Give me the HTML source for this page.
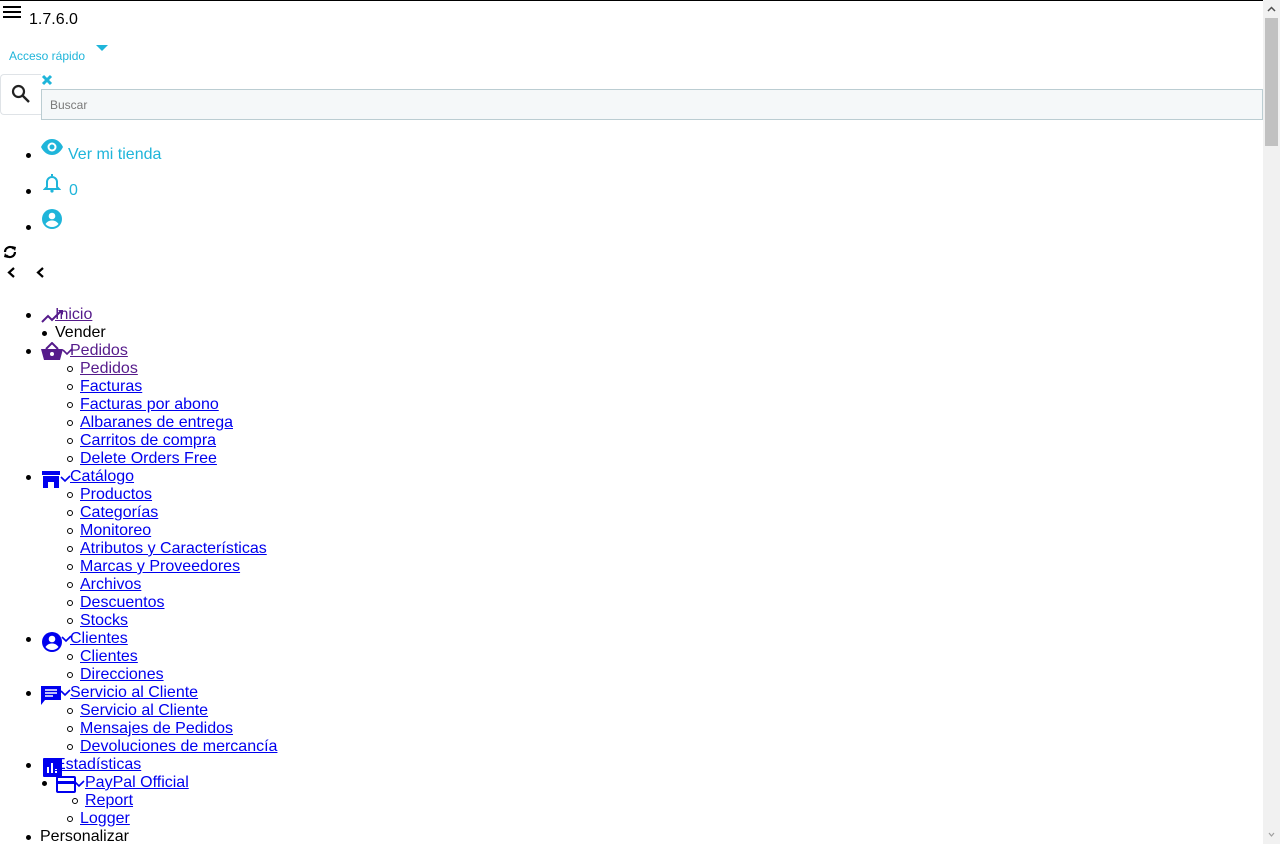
<!DOCTYPE html>
<html><head><meta charset="utf-8"><style>
html,body{margin:0;padding:0;}
body{width:1280px;height:844px;overflow:hidden;position:relative;background:#fff;font-family:"Liberation Sans",Arial,sans-serif;font-size:16px;color:#000;}
.a{position:absolute;white-space:nowrap;line-height:18px;}
.u,.m{text-decoration:underline;margin-top:2px;}
.m{text-decoration:none}
.b{color:#0000ee}.v{color:#551a8b}.c{color:#1fb5da}
.dot{position:absolute;width:5px;height:5px;border-radius:50%;background:#000;}
.cir{position:absolute;width:4px;height:4px;border-radius:50%;border:1px solid #000;}
svg{position:absolute;}
</style></head><body>
<div style="position:absolute;left:0;top:0;width:1263px;height:1px;background:#000"></div>
<div style="position:absolute;left:1263px;top:0;width:17px;height:844px;background:#f1f1f1"></div>
<div style="position:absolute;left:1265px;top:18px;width:13px;height:128px;background:#c1c1c1"></div>
<svg style="left:1266px;top:5px" width="11" height="8" viewBox="0 0 11 8"><path d="M2 6 L5.5 2.5 L9 6" stroke="#505050" stroke-width="1.5" fill="none"/></svg>
<svg style="left:1266px;top:831px" width="11" height="8" viewBox="0 0 11 8"><path d="M3 2 L5.5 5 L8 2" stroke="#a0a0a0" stroke-width="1.2" fill="none"/></svg>

<svg style="left:3px;top:6px" width="18" height="13" viewBox="0 0 18 13"><path d="M0 1h18M0 6h18M0 11h18" stroke="#000" stroke-width="2"/></svg>
<div class="a" style="left:29px;top:11px">1.7.6.0</div>
<div class="a c" style="left:9px;top:47px;font-size:12px">Acceso rápido</div>
<svg style="left:96px;top:45px" width="12" height="6" viewBox="0 0 12 6"><path d="M0 0h12L6 6z" fill="#1fb5da"/></svg>

<div style="position:absolute;left:0;top:74px;width:41px;height:41px;border:1px solid #dfe3e7;border-right:none;border-radius:4px 0 0 4px;box-sizing:border-box"></div>
<svg style="left:11px;top:84px" width="20" height="20" viewBox="0 0 20 20"><circle cx="7.5" cy="7.5" r="5.5" stroke="#222" stroke-width="2.2" fill="none"/><path d="M11.5 11.5L18 18" stroke="#222" stroke-width="2.4"/></svg>
<svg style="left:41px;top:74px" width="12" height="12" viewBox="0 0 12 12"><path d="M2 2L10 10M10 2L2 10" stroke="#1fb5da" stroke-width="3"/></svg>
<div style="position:absolute;left:41px;top:89px;width:1222px;height:31px;background:#f5f8f9;border:1px solid #bbcdd2;box-sizing:border-box"></div>
<div class="a" style="left:50px;top:96px;font-size:12px;color:#7a7a7a">Buscar</div>

<div class="dot" style="left:26px;top:153px"></div>
<svg style="left:40px;top:138px" width="24" height="18" viewBox="0 0 24 18"><path d="M1 9C4 3 8 1 12 1s8 2 11 8c-3 6-7 8-11 8S4 15 1 9z" fill="#1fb5da"/><circle cx="12" cy="9" r="4.5" fill="#fff"/><circle cx="12" cy="9" r="2.5" fill="#1fb5da"/></svg>
<div class="a c" style="left:68px;top:146px">Ver mi tienda</div>

<div class="dot" style="left:26px;top:189px"></div>
<svg style="left:43px;top:173px" width="18" height="20" viewBox="0 0 18 20"><path d="M9 1v2M4 14V9a5 5 0 0 1 10 0v5l2 2H2z" stroke="#1fb5da" stroke-width="2" fill="none"/><circle cx="9" cy="18" r="1.6" fill="#1fb5da"/></svg>
<div class="a c" style="left:69px;top:182px">0</div>

<div class="dot" style="left:26px;top:225px"></div>
<svg style="left:41px;top:208px" width="22" height="22" viewBox="0 0 22 22"><circle cx="11" cy="11" r="10" fill="#1fb5da"/><circle cx="11" cy="8" r="3.3" fill="#fff"/><path d="M4.5 16c2-3 4.3-3.5 6.5-3.5s4.5.5 6.5 3.5c-1.8 2-4 3-6.5 3s-4.7-1-6.5-3z" fill="#fff"/></svg>

<svg style="left:2px;top:244px" width="16" height="16" viewBox="0 0 16 16"><path d="M3 8a5 5 0 0 1 9-3M13 8a5 5 0 0 1-9 3" stroke="#000" stroke-width="2.2" fill="none"/><path d="M10 2l4 1-1 4zM6 14l-4-1 1-4z" fill="#000"/></svg>
<svg style="left:6px;top:266px" width="10" height="13" viewBox="0 0 10 13"><path d="M8 2L3 6.5 8 11" stroke="#000" stroke-width="2.2" fill="none"/></svg>
<svg style="left:35px;top:266px" width="10" height="13" viewBox="0 0 10 13"><path d="M8 2L3 6.5 8 11" stroke="#000" stroke-width="2.2" fill="none"/></svg>

<div class="dot" style="left:26px;top:313px"></div>
<svg style="left:41px;top:308px" width="24" height="16" viewBox="0 0 24 16"><path d="M1 14l6-6 4 4 9-9" stroke="#551a8b" stroke-width="2" fill="none"/><path d="M17 2h5v5z" fill="#551a8b"/></svg>
<div class="a u v" style="left:55px;top:304px">Inicio</div>
<div class="dot" style="left:42px;top:331px"></div>
<div class="a m" style="left:55px;top:322px">Vender</div>

<div class="dot" style="left:26px;top:349px"></div>
<svg style="left:41px;top:342px" width="32" height="20" viewBox="0 0 32 20"><path d="M0 7h22l-3 11H3z" fill="#551a8b"/><path d="M5 7l6-6 6 6" stroke="#551a8b" stroke-width="2" fill="none"/><circle cx="11" cy="12" r="2" fill="#fff"/><path d="M22 8l4 4 5-5" stroke="#551a8b" stroke-width="1.6" fill="none"/></svg>
<div class="a u v" style="left:70px;top:340px">Pedidos</div>

<div class="cir" style="left:67px;top:366px"></div><div class="a u v" style="left:80px;top:358px">Pedidos</div>
<div class="cir" style="left:67px;top:384px"></div><div class="a u b" style="left:80px;top:376px">Facturas</div>
<div class="cir" style="left:67px;top:402px"></div><div class="a u b" style="left:80px;top:394px">Facturas por abono</div>
<div class="cir" style="left:67px;top:420px"></div><div class="a u b" style="left:80px;top:412px">Albaranes de entrega</div>
<div class="cir" style="left:67px;top:438px"></div><div class="a u b" style="left:80px;top:430px">Carritos de compra</div>
<div class="cir" style="left:67px;top:456px"></div><div class="a u b" style="left:80px;top:448px">Delete Orders Free</div>

<div class="dot" style="left:26px;top:475px"></div>
<svg style="left:42px;top:469px" width="32" height="20" viewBox="0 0 32 20"><rect x="0" y="2" width="18" height="4" fill="#0000ee"/><path d="M1 7h16v12h-5v-6H6v6H1z" fill="#0000ee"/><path d="M19 8l4 4 5-5" stroke="#0000ee" stroke-width="1.6" fill="none"/></svg>
<div class="a u b" style="left:70px;top:466px">Catálogo</div>
<div class="cir" style="left:67px;top:492px"></div><div class="a u b" style="left:80px;top:484px">Productos</div>
<div class="cir" style="left:67px;top:510px"></div><div class="a u b" style="left:80px;top:502px">Categorías</div>
<div class="cir" style="left:67px;top:528px"></div><div class="a u b" style="left:80px;top:520px">Monitoreo</div>
<div class="cir" style="left:67px;top:546px"></div><div class="a u b" style="left:80px;top:538px">Atributos y Características</div>
<div class="cir" style="left:67px;top:564px"></div><div class="a u b" style="left:80px;top:556px">Marcas y Proveedores</div>
<div class="cir" style="left:67px;top:582px"></div><div class="a u b" style="left:80px;top:574px">Archivos</div>
<div class="cir" style="left:67px;top:600px"></div><div class="a u b" style="left:80px;top:592px">Descuentos</div>
<div class="cir" style="left:67px;top:618px"></div><div class="a u b" style="left:80px;top:610px">Stocks</div>

<div class="dot" style="left:26px;top:637px"></div>
<svg style="left:41px;top:631px" width="32" height="22" viewBox="0 0 32 22"><circle cx="11" cy="11" r="10" fill="#0000ee"/><circle cx="11" cy="8" r="3.3" fill="#fff"/><path d="M4.5 16c2-3 4.3-3.5 6.5-3.5s4.5.5 6.5 3.5c-1.8 2-4 3-6.5 3s-4.7-1-6.5-3z" fill="#fff"/><path d="M21 6l4 4 5-5" stroke="#0000ee" stroke-width="1.6" fill="none"/></svg>
<div class="a u b" style="left:70px;top:628px">Clientes</div>
<div class="cir" style="left:67px;top:654px"></div><div class="a u b" style="left:80px;top:646px">Clientes</div>
<div class="cir" style="left:67px;top:672px"></div><div class="a u b" style="left:80px;top:664px">Direcciones</div>

<div class="dot" style="left:26px;top:691px"></div>
<svg style="left:41px;top:685px" width="32" height="22" viewBox="0 0 32 22"><path d="M0 1h20v14H4l-4 5z" fill="#0000ee"/><path d="M4 5h12M4 8h12M4 11h8" stroke="#fff" stroke-width="1.6"/><path d="M20 6l4 4 5-5" stroke="#0000ee" stroke-width="1.6" fill="none"/></svg>
<div class="a u b" style="left:70px;top:682px">Servicio al Cliente</div>
<div class="cir" style="left:67px;top:708px"></div><div class="a u b" style="left:80px;top:700px">Servicio al Cliente</div>
<div class="cir" style="left:67px;top:726px"></div><div class="a u b" style="left:80px;top:718px">Mensajes de Pedidos</div>
<div class="cir" style="left:67px;top:744px"></div><div class="a u b" style="left:80px;top:736px">Devoluciones de mercancía</div>

<div class="dot" style="left:26px;top:763px"></div>
<svg style="left:43px;top:758px" width="19" height="19" viewBox="0 0 19 19"><rect width="19" height="19" rx="1" fill="#0000ee"/><path d="M5 15V9M9 15V5M13 15v-4" stroke="#fff" stroke-width="2"/></svg>
<div class="a u b" style="left:55px;top:754px">Estadísticas</div>
<div class="dot" style="left:42px;top:781px"></div>
<svg style="left:56px;top:775px" width="32" height="20" viewBox="0 0 32 20"><rect x="1" y="2" width="18" height="15" rx="1" stroke="#0000ee" stroke-width="2" fill="none"/><rect x="1" y="6" width="18" height="3" fill="#0000ee"/><path d="M19 7l4 4 5-5" stroke="#0000ee" stroke-width="1.6" fill="none"/></svg>
<div class="a u b" style="left:85px;top:772px">PayPal Official</div>
<div class="cir" style="left:72px;top:798px"></div><div class="a u b" style="left:85px;top:790px">Report</div>
<div class="cir" style="left:67px;top:816px"></div><div class="a u b" style="left:80px;top:808px">Logger</div>
<div class="dot" style="left:26px;top:835px"></div>
<div class="a m" style="left:40px;top:826px">Personalizar</div>
</body></html>
